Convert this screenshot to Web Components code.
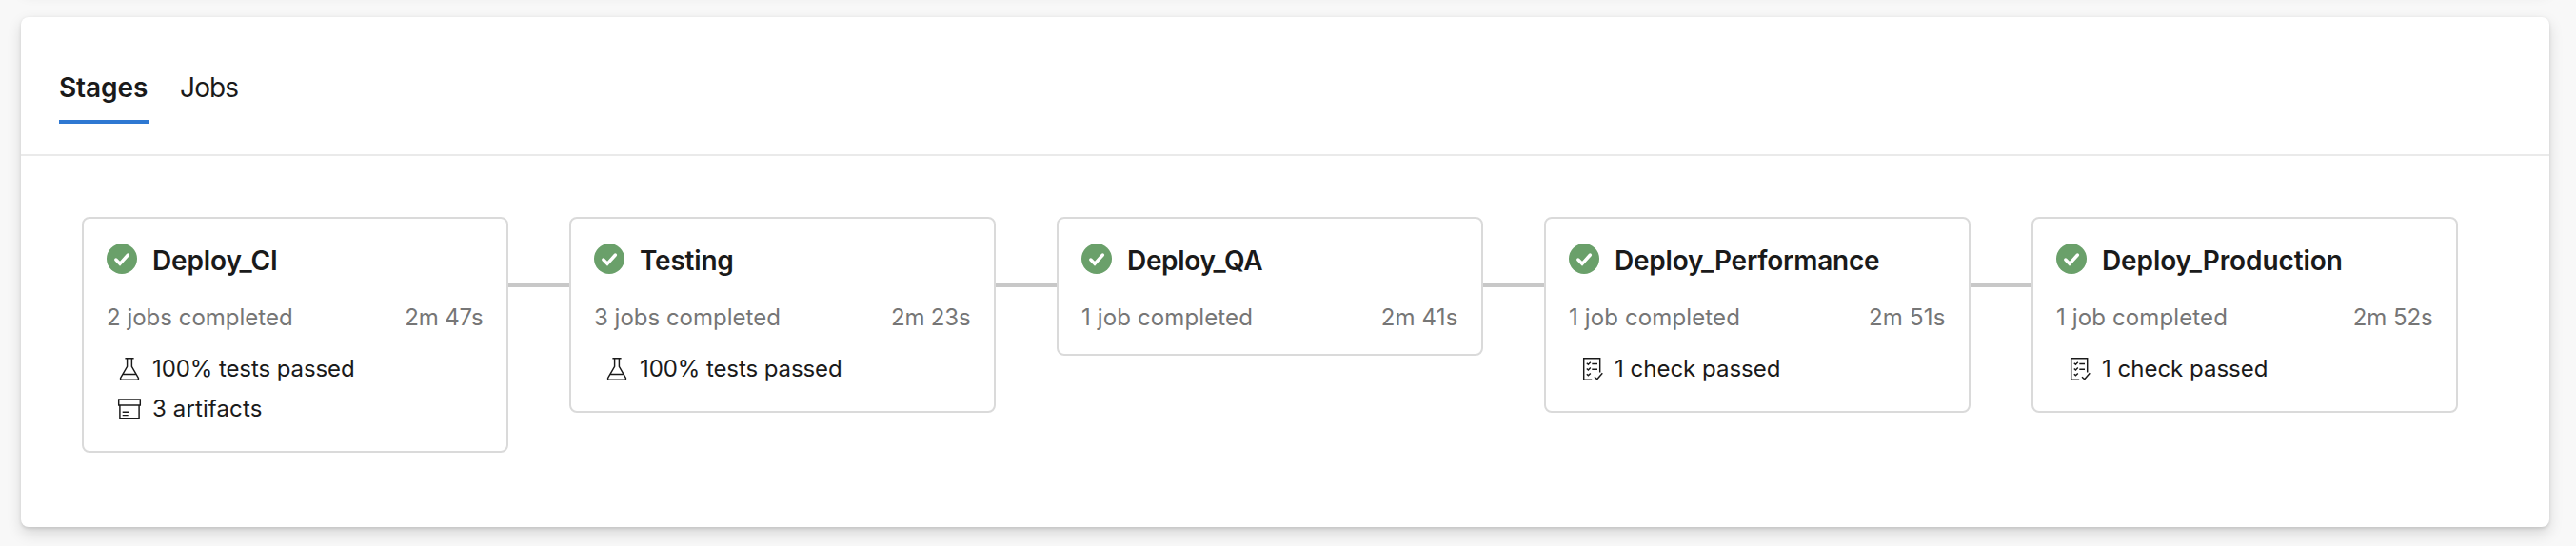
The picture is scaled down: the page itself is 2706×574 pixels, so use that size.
<!DOCTYPE html>
<html lang="en">
<head>
<meta charset="utf-8">
<title>Pipeline run</title>
<style>
html, body { margin: 0; height: 100%; overflow: hidden; }
body { background: #f8f8f8; color: #1a1a1a; font-family: Inter, "Liberation Sans", sans-serif; padding: 0 28px 0 22px; box-sizing: border-box; display: flex; flex-direction: column; }
</style>
</head>
<body>
<panel-card style="height:40px;margin-top:-54px"></panel-card>
<panel-card style="height:536px;margin-top:32px">
  <tab-bar>
    <tab-item selected style="width:94px;letter-spacing:-.1px">Stages</tab-item>
    <tab-item style="letter-spacing:-.85px">Jobs</tab-item>
  </tab-bar>
  <stage-graph>
    <stage-card name="Deploy_CI" jobs="2 jobs completed" time="2m 47s" style="--title-ls:-.13px;--time-ls:-.17px">
      <stage-fact icon="flask" style="letter-spacing:-.09px">100% tests passed</stage-fact>
      <stage-fact icon="archive" style="letter-spacing:.12px">3 artifacts</stage-fact>
    </stage-card>
    <stage-link></stage-link>
    <stage-card name="Testing" jobs="3 jobs completed" time="2m 23s" style="--title-ls:-.21px;--time-ls:-.17px">
      <stage-fact icon="flask" style="letter-spacing:-.09px">100% tests passed</stage-fact>
    </stage-card>
    <stage-link></stage-link>
    <stage-card name="Deploy_QA" jobs="1 job completed" time="2m 41s" style="--title-ls:-.33px;--jobs-ls:.13px;--time-ls:.16px"></stage-card>
    <stage-link></stage-link>
    <stage-card name="Deploy_Performance" jobs="1 job completed" time="2m 51s" style="--title-ls:-.22px;--jobs-ls:.13px;--time-ls:.18px">
      <stage-fact icon="checklist">1 check passed</stage-fact>
    </stage-card>
    <stage-link></stage-link>
    <stage-card name="Deploy_Production" jobs="1 job completed" time="2m 52s" style="--title-ls:-.1px;--jobs-ls:.13px;--time-ls:-.1px">
      <stage-fact icon="checklist">1 check passed</stage-fact>
    </stage-card>
  </stage-graph>
</panel-card>
<script>
const define = (name, render) => customElements.define(name, class extends HTMLElement {
  connectedCallback() {
    if (!this.shadowRoot) this.attachShadow({ mode: 'open' }).innerHTML = render(this);
  }
});

define('panel-card', () => `<style>
:host { display: flex; flex-direction: column; flex: none; box-sizing: border-box; background: #fff; border-radius: 8px;
  box-shadow: 0 6.4px 14.4px rgba(0,0,0,.132), 0 1.2px 3.6px rgba(0,0,0,.108); }
</style><slot></slot>`);

define('tab-bar', () => `<style>
:host { display: flex; gap: 33px; box-sizing: border-box; height: 146px; padding: 54px 40px 0; border-bottom: 2px solid #eaeaea; }
</style><slot></slot>`);

define('tab-item', () => `<style>
:host { display: block; box-sizing: border-box; height: 58px; font-size: 28px; line-height: 40px; white-space: nowrap; }
:host([selected]) { font-weight: 600; border-bottom: 4px solid #2e78d2; }
</style><slot></slot>`);

define('stage-graph', () => `<style>
:host { display: flex; align-items: flex-start; padding: 64px 64px 0; }
</style><slot></slot>`);

define('stage-link', () => `<style>
:host { display: block; flex: none; width: 64px; height: 4px; margin-top: 70px; background: #c8c8c8; }
</style>`);

define('status-icon', () => `<style>
:host { display: block; flex: none; width: 32px; height: 32px; }
svg { display: block; }
</style><svg width="32" height="32" viewBox="0 0 32 32"><circle cx="16" cy="16" r="16" fill="#6aa06a"/><path d="M9.8 17l4.2 4.3 8.4-9.3" fill="none" stroke="#fff" stroke-width="3.4" stroke-linecap="round" stroke-linejoin="miter"/></svg>`);

const icons = {
  flask: '<path d="M7.4 .7h9.2M9.6 .7v8.6L2.9 20.8C2 22.3 2.7 23.3 4 23.3h16c1.3 0 2-1 1.1-2.500L14.4 9.3V.7M4.9 17.4h14.2"/>',
  archive: '<path d="M.7 2h22.6v6H.7zM1.9 8v13.7h20.2V8M4.7 15.2H12M4.7 18.6h6"/>',
  checklist: '<path d="M12.2 23.3H3.7V.7h17v14.8M15 20.2l2.7 2.6 5.6-6.6M12.3 6.5H18M12.3 12.3H18M6.8 5.7l1.6 1.5 2.4-2.4M6.8 11.5l1.6 1.5 2.4-2.4M6.8 17.3l1.6 1.5 2.4-2.4"/>'
};

define('stage-fact', el => `<style>
:host { display: flex; align-items: center; gap: 12px; height: 42px; padding-left: 12px; font-size: 24px; line-height: 41px; white-space: nowrap; }
svg { display: block; flex: none; margin-top: 2px; overflow: visible; }
span { display: block; padding-top: 1px; }
</style><svg width="24" height="24" viewBox="0 0 24 24" fill="none" stroke="#1a1a1a" stroke-width="1.45">${icons[el.getAttribute('icon')]}</svg><span><slot></slot></span>`);

define('stage-card', el => `<style>
:host { display: block; flex: none; box-sizing: border-box; width: 448px; padding: 24px; background: #fff; border: 2px solid #dadada; border-radius: 8px; }
.title { display: flex; align-items: center; gap: 16px; height: 40px; font-size: 28px; font-weight: 600; line-height: 40px; letter-spacing: var(--title-ls, 0); white-space: nowrap; }
status-icon { margin-top: -4px; }
.meta { display: flex; justify-content: space-between; margin-top: 24px; padding: 1px .5px 0 0; font-size: 24px; line-height: 29px; color: #767676; white-space: nowrap; }
.jobs { letter-spacing: var(--jobs-ls, 0); }
.time { letter-spacing: var(--time-ls, 0); }
.facts { margin-top: 18px; }
</style>
<div class="title"><status-icon></status-icon><span>${el.getAttribute('name')}</span></div>
<div class="meta"><span class="jobs">${el.getAttribute('jobs')}</span><span class="time">${el.getAttribute('time')}</span></div>
${el.querySelector('stage-fact') ? '<div class="facts"><slot></slot></div>' : ''}`);
</script>
</body>
</html>
